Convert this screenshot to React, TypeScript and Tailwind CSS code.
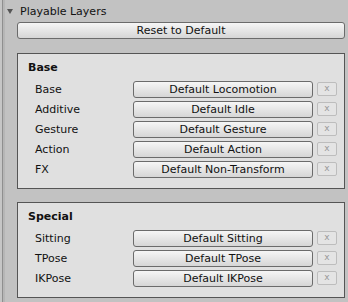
import React from "react";

const font = { fontFamily: '"DejaVu Sans", Verdana, sans-serif' };

function Btn({ label }: { label: string }) {
  return (
    <div className="h-[17px] flex items-center justify-center rounded-[3px] border border-[#6b6b6b] bg-gradient-to-b from-[#f6f6f6] to-[#d6d6d6] text-[11px] leading-none text-[#111] whitespace-nowrap">
      {label}
    </div>
  );
}

function Row({ label, value }: { label: string; value: string }) {
  return (
    <div className="flex items-center h-[17px]">
      <div className="w-[115px] pl-[17px] text-[11px] leading-none text-[#111] shrink-0">{label}</div>
      <div className="w-[180px] shrink-0">
        <Btn label={value} />
      </div>
      <div className="ml-[4px] w-[20px] h-[14px] -mt-[2px] flex items-center justify-center rounded-[2px] border border-[#bdbdbd] bg-[#e4e4e4] text-[9px] leading-none text-[#9a9a9a]">
        x
      </div>
    </div>
  );
}

function Box({ title, rows }: { title: string; rows: [string, string][] }) {
  return (
    <div className="border border-[#555555] bg-[#e0e0e0] pt-[6px] pb-[10px]">
      <div className="pl-[10px] h-[14px] flex items-center text-[11px] font-bold leading-none text-[#111]">{title}</div>
      <div className="mt-[7px] flex flex-col gap-[3px]">
        {rows.map(([l, v]) => (
          <Row key={l} label={l} value={v} />
        ))}
      </div>
    </div>
  );
}

export default function App() {
  return (
    <div className="w-[348px] h-[302px] bg-[#c2c2c2] flex overflow-hidden" style={font}>
      <div className="w-[2px] bg-[#c6c6c6]" />
      <div className="w-[1px] bg-[#8f8f8f]" />
      <div className="w-[2px] bg-[#b6b6b6]" />
      <div className="flex-1 flex flex-col">
        <div className="h-[22px] flex items-center">
          <svg width="6" height="6" viewBox="0 0 6 6" className="ml-[2px] mt-[1px]">
            <polygon points="0,0 6,0 3,5" fill="#555555" />
          </svg>
          <span className="ml-[7px] text-[11px] leading-none text-[#111]">Playable Layers</span>
        </div>
        <div className="ml-[12px] mr-[3px] flex flex-col">
          <Btn label="Reset to Default" />
          <div className="mt-[14px]">
            <Box
              title="Base"
              rows={[
                ["Base", "Default Locomotion"],
                ["Additive", "Default Idle"],
                ["Gesture", "Default Gesture"],
                ["Action", "Default Action"],
                ["FX", "Default Non-Transform"],
              ]}
            />
          </div>
          <div className="mt-[13px]">
            <Box
              title="Special"
              rows={[
                ["Sitting", "Default Sitting"],
                ["TPose", "Default TPose"],
                ["IKPose", "Default IKPose"],
              ]}
            />
          </div>
        </div>
      </div>
    </div>
  );
}
